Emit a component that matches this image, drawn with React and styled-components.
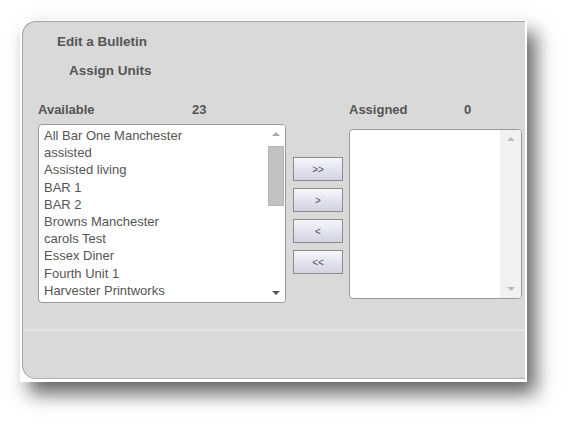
import React from 'react';
import styled, { createGlobalStyle } from 'styled-components';

const GlobalStyle = createGlobalStyle`
  body {
    margin: 0;
    background: #fff;
    font-family: "Liberation Sans", Arial, sans-serif;
  }
`;

const Page = styled.div`
  padding: 20px 0 42px 20px;
`;

const Frame = styled.div`
  width: 507px;
  height: 362px;
  box-sizing: border-box;
  background: #fff;
  padding: 1px 2px 3px 2px;
  box-shadow: 9px 12px 18px rgba(0, 0, 0, 0.6);
`;

const Panel = styled.div`
  height: 100%;
  box-sizing: border-box;
  background: #d9d9d9;
  border: 1px solid #a3a3a3;
  border-right: none;
  border-bottom-color: #b0b0b0;
  border-radius: 14px 0 0 14px;
  display: flex;
  flex-direction: column;
  overflow: hidden;
`;

const Body = styled.div`
  flex: 1;
  padding: 12px 0 0 15px;
  display: flex;
  flex-direction: column;
`;

const Footer = styled.div`
  height: 47px;
  border-top: 2px solid #e4e4e4;
`;

const Heading = styled.div`
  font-size: 13.5px;
  font-weight: bold;
  line-height: 16px;
  color: #555;
  margin-left: ${p => p.indent}px;
  margin-top: ${p => p.gap}px;
`;

const Columns = styled.div`
  display: flex;
  align-items: flex-start;
  margin-top: 23px;
`;

const Column = styled.div`
  width: ${p => p.width}px;
  display: flex;
  flex-direction: column;
`;

const LabelRow = styled.div`
  display: grid;
  grid-template-columns: ${p => p.split}px auto;
  font-size: 13px;
  font-weight: bold;
  line-height: 16px;
  color: #555;
`;

const ListBox = styled.div`
  margin-top: ${p => p.top}px;
  height: ${p => p.height}px;
  box-sizing: border-box;
  background: #fff;
  border: 1px solid #9a9a9a;
  border-radius: 4px;
  display: flex;
  overflow: hidden;
`;

const Items = styled.div`
  flex: 1;
  padding: 2px 0 0 5px;
`;

const Item = styled.div`
  font-size: 13px;
  line-height: 17.2px;
  color: #555;
  white-space: nowrap;
`;

const ScrollBar = styled.div`
  width: ${p => p.width}px;
  background: ${p => p.track};
  display: flex;
  flex-direction: column;
  align-items: center;
`;

const Arrow = styled.div`
  width: 0;
  height: 0;
  margin: ${p => (p.up ? '7px 0 0' : '0 0 7px')};
  border-left: 4px solid transparent;
  border-right: 4px solid transparent;
  ${p => (p.up ? 'border-bottom' : 'border-top')}: 4px solid ${p => p.color};
`;

const Thumb = styled.div`
  width: 16px;
  height: 60px;
  margin-top: 10px;
  background: #c2c2c2;
  border: 1px solid #b4b4b4;
  box-sizing: border-box;
`;

const Spacer = styled.div`
  flex: 1;
`;

const ButtonCol = styled.div`
  margin: 55px 6px 0 7px;
  display: flex;
  flex-direction: column;
  gap: 7px;
`;

const MoveButton = styled.div`
  width: 50px;
  height: 24px;
  box-sizing: border-box;
  border: 1px solid #8c8c8c;
  background: linear-gradient(#f6f6fb, #d2d2e2);
  display: flex;
  align-items: center;
  justify-content: center;
  font-size: 10px;
  color: #4e4e68;
`;

const units = [
  'All Bar One Manchester',
  'assisted',
  'Assisted living',
  'BAR 1',
  'BAR 2',
  'Browns Manchester',
  'carols Test',
  'Essex Diner',
  'Fourth Unit 1',
  'Harvester Printworks',
];

function App() {
  return (
    <Page>
      <GlobalStyle />
      <Frame>
        <Panel>
          <Body>
            <Heading indent={19} gap={0}>Edit a Bulletin</Heading>
            <Heading indent={31} gap={13}>Assign Units</Heading>
            <Columns>
              <Column width={248}>
                <LabelRow split={154}>
                  <span>Available</span>
                  <span>23</span>
                </LabelRow>
                <ListBox top={6} height={179}>
                  <Items>
                    {units.map(u => (
                      <Item key={u}>{u}</Item>
                    ))}
                  </Items>
                  <ScrollBar width={19} track="#fff">
                    <Arrow up color="#aaa" />
                    <Thumb />
                    <Spacer />
                    <Arrow color="#555" />
                  </ScrollBar>
                </ListBox>
              </Column>
              <ButtonCol>
                <MoveButton>&gt;&gt;</MoveButton>
                <MoveButton>&gt;</MoveButton>
                <MoveButton>&lt;</MoveButton>
                <MoveButton>&lt;&lt;</MoveButton>
              </ButtonCol>
              <Column width={173}>
                <LabelRow split={115}>
                  <span>Assigned</span>
                  <span>0</span>
                </LabelRow>
                <ListBox top={11} height={170}>
                  <Items />
                  <ScrollBar width={21} track="#f1f1f1">
                    <Arrow up color="#bbb" />
                    <Spacer />
                    <Arrow color="#bbb" />
                  </ScrollBar>
                </ListBox>
              </Column>
            </Columns>
          </Body>
          <Footer />
        </Panel>
      </Frame>
    </Page>
  );
}

export default App;
